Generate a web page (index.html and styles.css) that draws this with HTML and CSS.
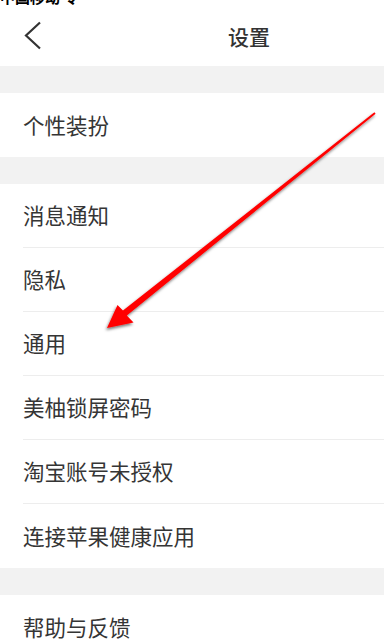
FILE: index.html
```html
<!DOCTYPE html>
<html lang="zh">
<head>
<meta charset="utf-8">
<link rel="stylesheet" href="styles.css">
</head>
<body>
<div class="page">
  <div class="status"><span class="status-text">中国移动 令</span></div>
  <div class="header">
    <svg class="back" width="22" height="30" viewBox="0 0 22 30"><polyline points="17,1.5 3,14.5 17,27.5" fill="none" stroke="#333" stroke-width="2.2" stroke-linejoin="miter"/></svg>
    <div class="title">设置</div>
  </div>
  <div class="gap"></div>
  <div class="row"><span>个性装扮</span></div>
  <div class="gap"></div>
  <div class="group">
    <div class="row line"><span>消息通知</span></div>
    <div class="row line"><span>隐私</span></div>
    <div class="row line"><span>通用</span></div>
    <div class="row line"><span>美柚锁屏密码</span></div>
    <div class="row line"><span>淘宝账号未授权</span></div>
    <div class="row"><span>连接苹果健康应用</span></div>
  </div>
  <div class="gap"></div>
  <div class="row"><span>帮助与反馈</span></div>

  <svg class="arrow" width="384" height="643" viewBox="0 0 384 643">
    <defs>
      <filter id="sh" x="-10%" y="-10%" width="120%" height="120%">
        <feDropShadow dx="-1" dy="2" stdDeviation="1.4" flood-color="#000" flood-opacity="0.55"/>
      </filter>
    </defs>
    <polygon filter="url(#sh)" fill="#ff0000"
      points="374.4,112.3 123.0,310.6 117.5,305 107,328 133.5,322.5 126.8,315.4 375.6,113.7"/>
  </svg>
</div>
</body>
</html>
```
FILE: styles.css
```css
html, body {
  margin: 0;
  padding: 0;
  background: #ffffff;
}
.page {
  position: relative;
  width: 384px;
  height: 643px;
  overflow: hidden;
  font-family: "Noto Sans CJK SC", "Noto Sans", sans-serif;
  color: #333333;
}
.status {
  height: 6px;
  overflow: hidden;
}
.status-text {
  display: block;
  margin-top: -11px;
  font-size: 15px;
  line-height: 16px;
  font-weight: bold;
  color: #000;
}
.header {
  height: 60px;
  display: flex;
  align-items: center;
}
.back {
  margin-left: 23px;
  display: block;
}
.title {
  margin-left: 183px;
  font-size: 21px;
  line-height: 30px;
  font-weight: 500;
  color: #333;
}
.gap {
  height: 27px;
  background: #f2f2f2;
}
.row {
  height: 64px;
  box-sizing: border-box;
  margin-left: 23px;
  display: flex;
  align-items: center;
  padding-bottom: 2px;
  font-size: 21.5px;
  color: #353535;
}
.row.line {
  border-bottom: 1px solid #ededed;
}
.arrow {
  position: absolute;
  left: 0;
  top: 0;
  pointer-events: none;
}
```
